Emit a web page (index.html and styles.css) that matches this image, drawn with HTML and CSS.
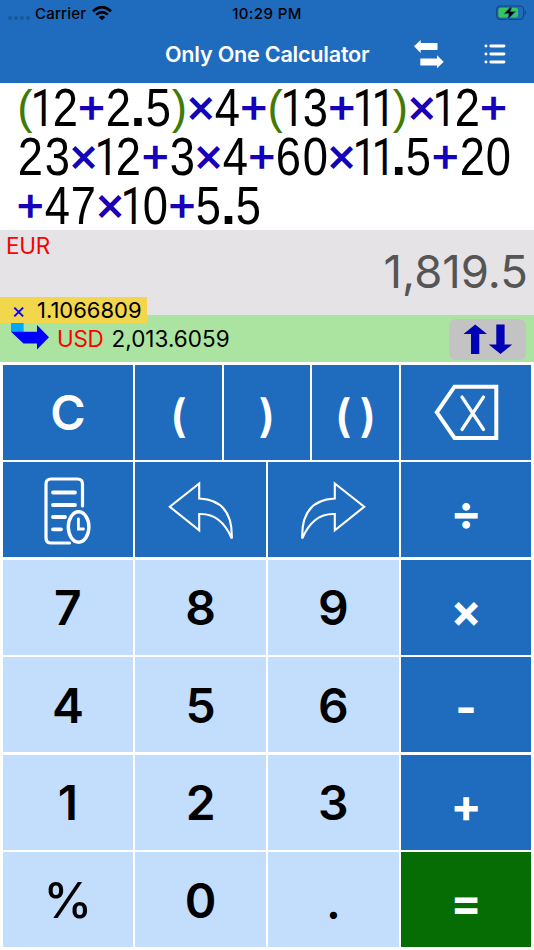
FILE: index.html
```
<!DOCTYPE html>
<html lang="en">
<head>
  <meta charset="UTF-8" />
  <meta name="viewport" content="width=device-width, initial-scale=1.0" />
  <title>Only One Calculator</title>
  <link rel="stylesheet" href="styles.css">
</head>
<body>
  <header>
    <div class="status">
      <div class="carrier">
        <span class="dots"><i></i><i></i><i></i><i></i></span>
        <span class="carrier-name">Carrier</span>
        <svg class="wifi" width="20" height="15" viewBox="0 0 20 15">
          <path d="M1 5.2 Q10 -3 19 5.2" fill="none" stroke="#000" stroke-width="2.7"/>
          <path d="M4.2 8.6 Q10 3.6 15.8 8.6" fill="none" stroke="#000" stroke-width="2.5"/>
          <path d="M6.8 11.2 Q10 8.4 13.2 11.2 L10 14.3 Z" fill="#000"/>
        </svg>
      </div>
      <span class="clock">10:29 PM</span>
      <svg class="battery" width="32" height="16" viewBox="0 0 32 16">
        <rect x="0.7" y="1" width="27" height="13.4" rx="4" fill="none" stroke="#14467c" stroke-width="1.2"/>
        <rect x="2.5" y="2.8" width="19.5" height="9.8" rx="2.2" fill="#35c759"/>
        <path d="M29 5.5 Q31.2 7.7 29 10 Z" fill="#14467c"/>
        <path d="M16 0.5 L8 8.7 H13 L11.3 15 L19.6 6.5 H14.5 Z" fill="#000" stroke="#1f6bbe" stroke-width="0.8"/>
      </svg>
    </div>
    <nav>
      <h1>Only One Calculator</h1>
      <svg class="swap" width="30" height="29" viewBox="0 0 30 29">
        <path d="M0 6.3 L6.7 0 V3 H23.5 V10 H6.7 V13 Z M29.7 21.7 L23 15.3 V18.4 H6.3 V25.4 H23 V28.3 Z" fill="#fff"/>
      </svg>
      <svg class="menu" width="22" height="22" viewBox="0 0 22 22">
        <g stroke="#fff" stroke-width="2.8" stroke-linecap="round">
          <path d="M1.9 3 H2 M6.8 3 H20 M1.9 11 H2 M6.8 11 H20 M1.9 19 H2 M6.8 19 H20"/>
        </g>
      </svg>
    </nav>
  </header>

  <section class="expression" id="expression"></section>

  <section class="result">
    <span class="currency">EUR</span>
    <span class="total">1,819.5</span>
    <div class="rate"><span class="times">×</span><span class="rate-value">1.1066809</span></div>
  </section>

  <section class="converted">
    <svg class="turn" width="38" height="27" viewBox="0 0 38 27">
      <rect x="0" y="0" width="12.6" height="9" fill="#00a8fb"/>
      <path d="M0 8.7 H26 V2 L38 14.3 L26 26.5 V20.5 H12.5 Z" fill="#0000fe"/>
    </svg>
    <span class="currency">USD</span>
    <span class="amount">2,013.6059</span>
    <button class="flip">
      <svg width="50" height="30" viewBox="0 0 50 30">
        <path d="M12.3 0.5 L24 10 H16.3 V30 H8 V10 H0.5 Z M37.5 30 L25.7 20.5 H33.3 V0.5 H41.6 V20.5 H49.2 Z" fill="#0000b4"/>
      </svg>
    </button>
  </section>

  <main class="keypad">
    <button class="key">C</button>
    <div class="brackets">
      <button class="key bracket">(</button>
      <button class="key bracket">)</button>
      <button class="key bracket pair"><span>(</span><span>)</span></button>
    </div>
    <button class="key">
      <svg width="66" height="58" viewBox="0 0 66 58">
        <path d="M21.5 2.7 H63.3 V54 H21.5 L3.8 28.3 Z" fill="none" stroke="#fff" stroke-width="4"/>
        <path d="M29 13 L50.5 45.5 M50.5 13 L29 45.5" stroke="#fff" stroke-width="3.2" stroke-linecap="round"/>
      </svg>
    </button>

    <button class="key">
      <svg width="48" height="68" viewBox="0 0 48 68">
        <g fill="none" stroke="#fff" stroke-linecap="round">
          <path d="M38.5 29 V7 Q38.5 2 33.5 2 H7 Q2 2 2 7 V61 Q2 66 7 66 H25.5" stroke-width="3.2"/>
          <path d="M9 15.5 H31 M9 28 H31 M9 40 H21 M9 52.3 H17" stroke-width="3.8"/>
          <ellipse cx="34.6" cy="50" rx="10.3" ry="15.2" stroke-width="3.4"/>
          <path d="M34.4 42 V52 H39.5" stroke-width="2.8"/>
        </g>
      </svg>
    </button>
    <button class="key">
      <svg width="66" height="60" viewBox="0 0 66 60">
        <path d="M31.2 2.5 L1.8 25.8 L31.2 49.2 V33 Q53 32 63.8 57.5 Q65 19 31.2 17.5 Z" fill="none" stroke="#fff" stroke-width="2.1"/>
      </svg>
    </button>
    <button class="key">
      <svg width="66" height="60" viewBox="0 0 66 60">
        <path d="M34.8 2.5 L64.2 25.8 L34.8 49.2 V33 Q13 32 2.2 57.5 Q1 19 34.8 17.5 Z" fill="none" stroke="#fff" stroke-width="2.1"/>
      </svg>
    </button>
    <button class="key op">÷</button>

    <button class="key num">7</button>
    <button class="key num">8</button>
    <button class="key num">9</button>
    <button class="key op">×</button>

    <button class="key num">4</button>
    <button class="key num">5</button>
    <button class="key num">6</button>
    <button class="key op">-</button>

    <button class="key num">1</button>
    <button class="key num">2</button>
    <button class="key num">3</button>
    <button class="key op">+</button>

    <button class="key num percent">%</button>
    <button class="key num">0</button>
    <button class="key num dot">.</button>
    <button class="key op equals">=</button>
  </main>

  <script>
    const lines = ["(12+2.5)×4+(13+11)×12+", "23×12+3×4+60×11.5+20", "+47×10+5.5"];
    const kinds = { "(": "paren", ")": "paren", "+": "sign", "×": "sign", "1": "one", ".": "point" };
    const expression = document.getElementById("expression");

    lines.forEach(text => {
      const line = document.createElement("div");
      line.className = "line";
      for (const ch of text) {
        const cell = document.createElement("span");
        cell.className = kinds[ch] || "digit";
        cell.textContent = ch;
        line.appendChild(cell);
      }
      expression.appendChild(line);
    });
  </script>
</body>
</html>
```
FILE: styles.css
```
body {
  margin: 0;
  height: 950px;
  overflow: hidden;
  display: flex;
  flex-direction: column;
  font-family: Inter, "Liberation Sans", sans-serif;
  background: #fff;
  color: #000;
}

header {
  height: 82.7px;
  background: #1f6bbe;
  flex: none;
}

.status {
  height: 26px;
  display: grid;
  grid-template-columns: 1fr auto 1fr;
  align-items: center;
  font-size: 15px;
  font-weight: 500;
}

.carrier {
  display: flex;
  align-items: center;
  padding-left: 8px;
}

.dots {
  display: flex;
  gap: 2px;
  padding-top: 9px;
}

.dots i {
  width: 4px;
  height: 4px;
  border-radius: 50%;
  background: #1a589b;
}

.carrier-name {
  margin-left: 5px;
  letter-spacing: 0.2px;
}

.wifi {
  margin-left: 6px;
}

.clock {
  letter-spacing: 0.4px;
}

.battery {
  justify-self: end;
  margin-right: 6px;
}

nav {
  height: 56px;
  display: grid;
  grid-template-columns: 165px 249px 70px 50px;
  align-items: center;
}

h1 {
  grid-column: 2;
  margin: 0;
  color: #fff;
  font-size: 21.6px;
  font-weight: 600;
  letter-spacing: -0.23px;
  white-space: nowrap;
}

/* every symbol of the formula sits in its own cell */
.expression {
  height: 147.3px;
  flex: none;
  padding-left: 17px;
  box-sizing: border-box;
}

.line {
  display: flex;
  height: 49px;
  line-height: 49px;
  font-family: "Liberation Sans", Arial, sans-serif;
  font-size: 54px;
}

.line span {
  display: flex;
  justify-content: center;
  width: 26.6px;
  flex: none;
}

.line .digit {
  transform: scaleX(0.84);
}

.line .one {
  width: 18.7px;
  padding-top: 1px;
  font-family: Roboto, sans-serif;
  font-size: 52px;
  transform: scaleX(0.8);
}

.line .point {
  width: 13.3px;
  font-weight: 700;
}

.line .paren {
  width: 16px;
  color: #427a07;
  font-size: 46px;
}

.line .sign {
  margin-top: -2.5px;
  color: #1600b9;
  font-family: Inter, sans-serif;
  font-size: 48px;
  font-weight: 500;
}

.result {
  position: relative;
  height: 85px;
  flex: none;
  display: flex;
  justify-content: space-between;
  background: #e5e3e6;
}

.currency {
  color: #fe0000;
  font-size: 22.5px;
  letter-spacing: -0.3px;
  line-height: 28px;
}

.result .currency {
  margin: 2px 0 0 6px;
}

.total {
  margin-right: 6px;
  color: #555;
  font-size: 45.5px;
  line-height: 84px;
}

.rate {
  position: absolute;
  left: 0;
  top: 67px;
  width: 147px;
  height: 26px;
  display: flex;
  align-items: center;
  background: #f2d64b;
  font-size: 22px;
}

.times {
  width: 37px;
  text-align: center;
  color: #0000fe;
}

.converted {
  height: 47px;
  flex: none;
  display: flex;
  align-items: center;
  background: #abe4a0;
}

.turn {
  margin-left: 11px;
  margin-top: -3px;
}

.converted .currency {
  margin-left: 8px;
  margin-top: 1px;
}

.amount {
  margin-left: 8px;
  font-size: 22.5px;
}

.flip {
  width: 77px;
  height: 41px;
  margin-left: auto;
  margin-right: 8px;
  margin-top: 2px;
  padding: 0;
  border: 0;
  border-radius: 7px;
  background: #c3c3c3;
  display: flex;
  align-items: center;
  justify-content: center;
}

.keypad {
  flex: 1;
  display: grid;
  grid-template-columns: repeat(4, 1fr);
  grid-template-rows: repeat(6, 1fr);
  gap: 2.4px;
  padding: 2.7px;
}

.brackets {
  grid-column: span 2;
  display: grid;
  grid-template-columns: repeat(3, 1fr);
  gap: 2.4px;
}

.key {
  display: flex;
  align-items: center;
  justify-content: center;
  padding: 2px 0 0;
  border: 0;
  background: #1f6bbe;
  color: #fff;
  font-family: inherit;
  font-size: 48px;
  font-weight: 600;
  line-height: 1;
}

.num {
  background: #c3defd;
  color: #000;
}

.bracket {
  padding-top: 7px;
  font-size: 45px;
}

.pair {
  gap: 8px;
}

.percent {
  font-size: 49px;
  font-weight: 500;
}

.dot {
  font-family: Lato, sans-serif;
  font-weight: 700;
}

.op {
  padding-top: 5px;
  font-size: 46px;
  font-weight: 700;
}

.equals {
  background: #066d05;
}
```
